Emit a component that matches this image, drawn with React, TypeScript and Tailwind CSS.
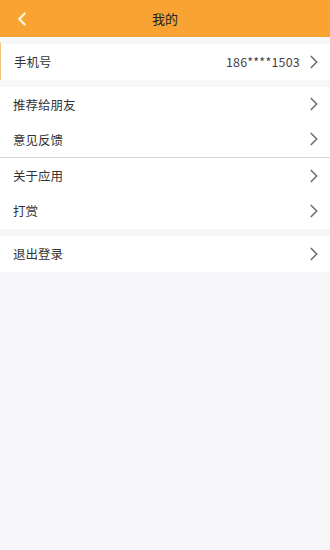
import { ChevronLeft, ChevronRight } from 'lucide-react'

const font = { fontFamily: '"Noto Sans CJK SC", "Noto Sans", sans-serif' }

function Row({ label, value, divider }: { label: string; value?: string; divider?: boolean }) {
  return (
    <div
      className={`flex h-[35.6px] items-center bg-white pl-[13px] pr-[5px] ${divider ? 'border-b border-[#d8d8d8]' : ''}`}
    >
      <span className="flex-1 pt-px text-[12.5px] text-[#333]">{label}</span>
      {value && <span className="mr-[3px] pt-px text-[12.5px] tracking-[0.2px] text-[#444]">{value}</span>}
      <ChevronRight size={22} strokeWidth={1.8} className="text-[#707070]" />
    </div>
  )
}

export default function App() {
  return (
    <div className="min-h-[550px] bg-[#f7f7f9]" style={font}>
      <div className="relative flex h-[37px] items-center justify-center bg-[#f9a333]">
        <ChevronLeft size={22} strokeWidth={2.5} className="absolute left-[11px] text-[#fff4e0]" />
        <span className="text-[13px] text-[#222]">我的</span>
      </div>

      <div className="mt-[6px] border-l border-[#f4c27a]">
        <div className="pt-px">
          <Row label="手机号" value="186****1503" />
        </div>
      </div>

      <div className="mt-[7px]">
        <Row label="推荐给朋友" />
        <Row label="意见反馈" divider />
        <Row label="关于应用" />
        <Row label="打赏" />
      </div>

      <div className="mt-[7px]">
        <Row label="退出登录" />
      </div>
    </div>
  )
}
